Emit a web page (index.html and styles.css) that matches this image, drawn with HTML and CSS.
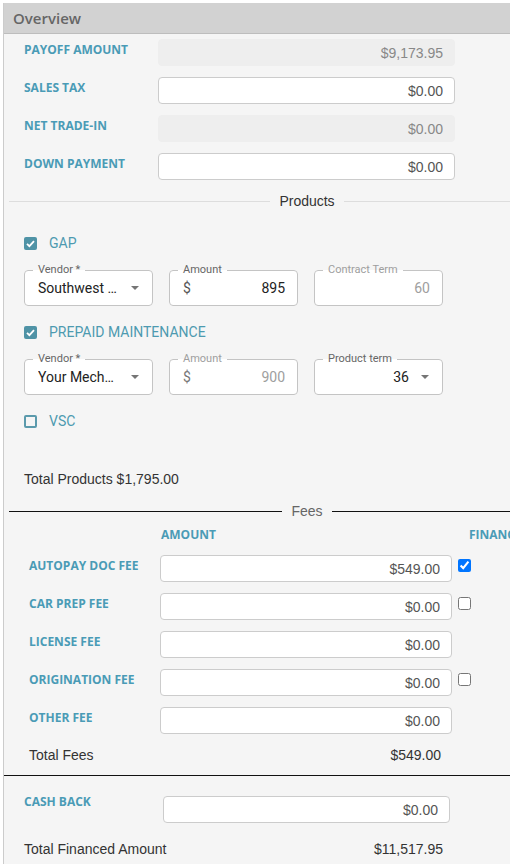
FILE: index.html
```html
<!DOCTYPE html>
<html lang="en">
<head>
    <meta charset="UTF-8">
    <meta name="viewport" content="width=device-width, initial-scale=1.0">
    <title>Deal Overview</title>
    <link rel="stylesheet" href="styles.css">
</head>
<body>
    <div class="panel">
        <div class="panel-header">Overview</div>

        <!-- Trade and payment -->
        <div class="form-grid overview">
            <label class="field-label">PAYOFF AMOUNT</label>
            <input class="money" type="text" value="$9,173.95" disabled>

            <label class="field-label">SALES TAX</label>
            <input class="money" type="text" value="$0.00">

            <label class="field-label">NET TRADE-IN</label>
            <input class="money" type="text" value="$0.00" disabled>

            <label class="field-label">DOWN PAYMENT</label>
            <input class="money" type="text" value="$0.00">
        </div>

        <div class="divider"><span>Products</span></div>

        <!-- Products -->
        <div class="products">
            <label class="product-check">
                <span class="check-box checked">
                    <svg width="13" height="13" viewBox="0 0 13 13"><polyline points="3,6.8 5.4,9.2 10,4.2" fill="none" stroke="#fff" stroke-width="1.8"/></svg>
                </span>
                GAP
            </label>
            <div class="product-fields">
                <fieldset class="outlined">
                    <legend>Vendor *</legend>
                    <div class="field-value">
                        <span class="select-text">Southwest Warranty</span>
                        <svg class="arrow" width="8" height="4" viewBox="0 0 10 5"><path d="M0 0l5 5 5-5z"/></svg>
                    </div>
                </fieldset>
                <fieldset class="outlined">
                    <legend>Amount</legend>
                    <div class="field-value">
                        <span class="prefix">$</span>
                        <span class="num">895</span>
                    </div>
                </fieldset>
                <fieldset class="outlined disabled">
                    <legend>Contract Term</legend>
                    <div class="field-value">
                        <span class="num">60</span>
                    </div>
                </fieldset>
            </div>

            <label class="product-check">
                <span class="check-box checked">
                    <svg width="13" height="13" viewBox="0 0 13 13"><polyline points="3,6.8 5.4,9.2 10,4.2" fill="none" stroke="#fff" stroke-width="1.8"/></svg>
                </span>
                PREPAID MAINTENANCE
            </label>
            <div class="product-fields">
                <fieldset class="outlined">
                    <legend>Vendor *</legend>
                    <div class="field-value">
                        <span class="select-text">Your Mechanic</span>
                        <svg class="arrow" width="8" height="4" viewBox="0 0 10 5"><path d="M0 0l5 5 5-5z"/></svg>
                    </div>
                </fieldset>
                <fieldset class="outlined disabled">
                    <legend>Amount</legend>
                    <div class="field-value">
                        <span class="prefix">$</span>
                        <span class="num">900</span>
                    </div>
                </fieldset>
                <fieldset class="outlined">
                    <legend>Product term</legend>
                    <div class="field-value">
                        <span class="num">36</span>
                        <svg class="arrow term-arrow" width="8" height="4" viewBox="0 0 10 5"><path d="M0 0l5 5 5-5z"/></svg>
                    </div>
                </fieldset>
            </div>

            <label class="product-check">
                <span class="check-box"></span>
                VSC
            </label>

            <div class="total-line products-total">Total Products $1,795.00</div>
        </div>

        <div class="divider dark"><span>Fees</span></div>

        <!-- Fees -->
        <div class="fees">
            <div class="fees-head"></div>
            <div class="fees-head">AMOUNT</div>
            <div class="fees-head financed">FINANCED</div>

            <label class="field-label">AUTOPAY DOC FEE</label>
            <input class="money" type="text" value="$549.00">
            <input class="fee-check" type="checkbox" checked>

            <label class="field-label">CAR PREP FEE</label>
            <input class="money" type="text" value="$0.00">
            <input class="fee-check" type="checkbox">

            <label class="field-label">LICENSE FEE</label>
            <input class="money" type="text" value="$0.00">
            <span></span>

            <label class="field-label">ORIGINATION FEE</label>
            <input class="money" type="text" value="$0.00">
            <input class="fee-check" type="checkbox">

            <label class="field-label">OTHER FEE</label>
            <input class="money" type="text" value="$0.00">
            <span></span>

            <div class="total-line">Total Fees</div>
            <div class="total-line total-amount">$549.00</div>
            <span></span>
        </div>

        <hr class="rule">

        <!-- Cash back and total -->
        <div class="form-grid cash">
            <label class="field-label">CASH BACK</label>
            <input class="money" type="text" value="$0.00">
        </div>
        <div class="form-grid cash financed-total">
            <div class="total-line">Total Financed Amount</div>
            <div class="total-line total-amount">$11,517.95</div>
        </div>
    </div>
</body>
</html>
```

FILE: styles.css
```css
/* General Reset */
body {
    margin: 0;
    background: #fff;
    font-family: 'Liberation Sans', Arial, sans-serif;
    color: #333;
    overflow: hidden;
}

/* Panel */
.panel {
    box-sizing: border-box;
    width: 608px;
    margin: 3px 0 0 3px;
    min-height: 900px;
    background: #f5f5f5;
    border-left: 1px solid #ccc;
    border-right: 1px solid #ccc;
}

.panel-header {
    height: 30px;
    line-height: 31px;
    padding-left: 9px;
    background: #d2d2d2;
    border-bottom: 1px solid #bdbdbd;
    font-family: 'Open Sans', sans-serif;
    font-size: 15px;
    font-weight: 600;
    color: #666;
}

/* Label / input grids */
.form-grid {
    display: grid;
    row-gap: 11px;
    padding-left: 20px;
}

.overview {
    grid-template-columns: 134px 297px;
    padding-top: 5px;
}

.cash {
    grid-template-columns: 139px 287px;
    margin-top: 20px;
}

.cash .field-label {
    padding-top: 0;
    margin-top: -2px;
}

.financed-total {
    margin-top: 16px;
}

.financed-total .total-amount {
    padding-right: 7px;
}

.field-label {
    align-self: start;
    padding-top: 3px;
    line-height: 16px;
    font-family: 'Open Sans', sans-serif;
    font-size: 12px;
    font-weight: 700;
    color: #4a9bb6;
    white-space: nowrap;
}

.money {
    box-sizing: border-box;
    width: 100%;
    height: 27px;
    margin: 0;
    padding: 0 11px;
    border: 1px solid #ccc;
    border-radius: 4px;
    background: #fff;
    font-family: 'Liberation Sans', Arial, sans-serif;
    font-size: 14px;
    color: #555;
    text-align: right;
}

.money:disabled {
    background: #eee;
    border-color: #eee;
    color: #888;
}

/* Section dividers */
.divider {
    display: flex;
    align-items: center;
    height: 20px;
    margin: 11px 5px 0;
    font-size: 14px;
    color: #333;
}

.divider::before,
.divider::after {
    content: "";
    flex: 1;
    border-top: 1px solid #ddd;
}

.divider span {
    padding: 0 9px;
}

.divider.dark {
    margin-top: 12px;
    color: #666;
}

.divider.dark::before,
.divider.dark::after {
    border-top-color: #111;
}

/* Products */
.products {
    padding-left: 20px;
    font-family: Roboto, sans-serif;
}

.product-check {
    display: flex;
    align-items: center;
    height: 20px;
    margin-top: 16px;
    font-size: 14px;
    color: #4d9ab0;
}

.product-check:first-child {
    margin-top: 22px;
}

.check-box {
    box-sizing: border-box;
    width: 13px;
    height: 13px;
    margin-right: 12px;
    border: 2px solid #5b9aac;
    border-radius: 2px;
}

.check-box.checked {
    border: none;
    background: #4f93a6;
}

.check-box svg {
    display: block;
}

.product-fields {
    display: flex;
    gap: 16px;
    margin-top: 11px;
}

.outlined {
    width: 129px;
    box-sizing: border-box;
    min-width: 0;
    margin: 0;
    padding: 0;
    border: 1px solid #c4c4c4;
    border-radius: 4px;
    background: #fff;
}

.outlined legend {
    margin-left: 8px;
    padding: 0 5px;
    font-size: 11px;
    line-height: 12px;
    color: #666;
}

.field-value {
    display: flex;
    align-items: center;
    height: 24px;
    padding: 0 12px 5px 13px;
    font-size: 14px;
    color: #222;
}

.select-text {
    width: 82px;
    white-space: nowrap;
    overflow: hidden;
    text-overflow: ellipsis;
}

.arrow {
    margin-left: auto;
    margin-right: 1px;
    fill: #757575;
}

.term-arrow {
    margin-left: 12px;
}

.prefix {
    color: #555;
}

.num {
    margin-left: auto;
}

.outlined.disabled legend,
.outlined.disabled .num {
    color: #9e9e9e;
}

.outlined.disabled .prefix {
    color: #777;
}

.total-line {
    height: 20px;
    line-height: 20px;
    font-family: 'Liberation Sans', Arial, sans-serif;
    font-size: 14px;
    color: #333;
    white-space: nowrap;
}

.products-total {
    margin-top: 38px;
}

.total-amount {
    text-align: right;
    padding-right: 11px;
}

/* Fees */
.fees {
    display: grid;
    grid-template-columns: 125px 292px 13px;
    column-gap: 6px;
    row-gap: 11px;
    padding-left: 25px;
    margin-top: 4px;
}

.fees-head {
    height: 20px;
    line-height: 20px;
    margin-bottom: -1px;
    padding-left: 1px;
    font-family: 'Open Sans', sans-serif;
    font-size: 12px;
    font-weight: 700;
    color: #4a9bb6;
    white-space: nowrap;
}

.fees-head.financed {
    padding-left: 11px;
}

.fee-check {
    align-self: start;
    width: 13px;
    height: 13px;
    margin: 4px 0 0;
}

.rule {
    margin: 10px 0 0;
    border: none;
    border-top: 1px solid #111;
}
```
